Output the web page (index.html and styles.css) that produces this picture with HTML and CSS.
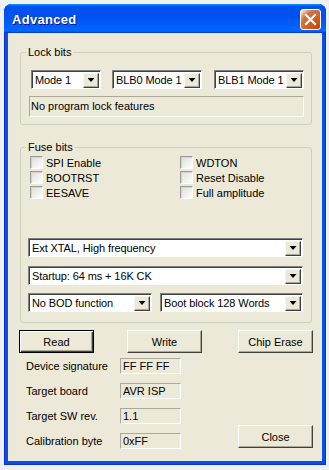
FILE: index.html
```html
<html>
<head>
	<link rel="stylesheet" href="styles.css">
</head>
<body>

	<div class="window">
		<div class="titlebar">
			<span class="title">Advanced</span>
			<span class="closex">
				<svg width="19" height="19" viewBox="0 0 19 19"><path d="M5 5 L14 14 M14 5 L5 14" stroke="#fff" stroke-width="2.2" stroke-linecap="square"/></svg>
			</span>
		</div>

		<div class="client">
			<fieldset class="group lock">
				<legend>Lock bits</legend>
				<div class="lockrow">
					<div class="combo mode"><span class="txt">Mode 1</span><span class="arrow"></span></div>
					<div class="combo blb0"><span class="txt">BLB0 Mode 1</span><span class="arrow"></span></div>
					<div class="combo blb1"><span class="txt">BLB1 Mode 1</span><span class="arrow"></span></div>
				</div>
				<div class="static lockinfo">No program lock features</div>
			</fieldset>

			<fieldset class="group fuse">
				<legend>Fuse bits</legend>
				<div class="checks">
					<div class="chk"><span class="box"></span>SPI Enable</div>
					<div class="chk"><span class="box"></span>WDTON</div>
					<div class="chk"><span class="box"></span>BOOTRST</div>
					<div class="chk"><span class="box"></span>Reset Disable</div>
					<div class="chk"><span class="box"></span>EESAVE</div>
					<div class="chk"><span class="box"></span>Full amplitude</div>
				</div>
				<div class="combo wide osc"><span class="txt">Ext XTAL, High frequency</span><span class="arrow"></span></div>
				<div class="combo wide startup"><span class="txt">Startup: 64 ms + 16K CK</span><span class="arrow"></span></div>
				<div class="fuserow">
					<div class="combo bod"><span class="txt">No BOD function</span><span class="arrow"></span></div>
					<div class="combo boot"><span class="txt">Boot block 128 Words</span><span class="arrow"></span></div>
				</div>
			</fieldset>

			<div class="buttons">
				<button class="button default">Read</button>
				<button class="button write">Write</button>
				<button class="button erase">Chip Erase</button>
			</div>

			<div class="bottom">
				<div class="info">
					<div class="inforow"><span class="lbl">Device signature</span><span class="val">FF FF FF</span></div>
					<div class="inforow"><span class="lbl">Target board</span><span class="val">AVR ISP</span></div>
					<div class="inforow"><span class="lbl">Target SW rev.</span><span class="val">1.1</span></div>
					<div class="inforow"><span class="lbl">Calibration byte</span><span class="val">0xFF</span></div>
				</div>
				<button class="button close">Close</button>
			</div>
		</div>
	</div>

</body>
</html>
```

FILE: styles.css
```css
body{margin:0; background:#eef0f3; font-family:"Liberation Sans", Arial, sans-serif; font-size:11px; color:#000;}

/* window frame */
.window{margin:4px 3px 0 4px; width:322px; height:461px; display:flex; flex-direction:column; background:#0a50e0; border-radius:8px 8px 0 0; box-shadow:inset 0 0 0 1px #0831d9;}
.titlebar{height:29px; flex:none; display:flex; align-items:center; justify-content:space-between; padding:1px 5px 0 8px; box-sizing:border-box; border-radius:7px 7px 0 0; background:linear-gradient(180deg,#0997ff,#0053ee 8%,#0050ee 40%,#06f 88%,#06f 93%,#005bff 95%,#003dd7 96%,#003dd7);}
.title{color:#fff; font-weight:bold; font-size:13px; letter-spacing:0.3px; text-shadow:1px 1px #0f1089;}
.closex{width:21px; height:21px; box-sizing:border-box; display:flex; align-items:center; justify-content:center; border:1px solid #fff; border-radius:3px; background:radial-gradient(circle at 90% 90%,#cc4600 0%,#dc6527 55%,#cd7546 70%,#ffccb2 90%,#fff 100%);}
.client{flex:1; margin:0 4px 4px; background:#ece9d8; display:flex; flex-direction:column;}

/* group boxes */
.group{margin:0 10px 0 12px; padding:0; border:1px solid #d0d0bf; border-radius:3px; min-inline-size:0;}
.group legend{padding:0 2px; margin-left:5px; line-height:13px;}
.lock{margin-top:13px; padding-bottom:7px;}
.fuse{margin-top:16px; padding-bottom:10px;}

/* combo boxes */
.combo{box-sizing:border-box; height:19px; display:flex; align-items:center; padding-left:3px; background:#fff; border:1px solid; border-color:#808080 #fff #fff #808080; box-shadow:inset 1px 1px #404040; white-space:nowrap;}
.combo .txt{flex:1; min-width:0; overflow:hidden; letter-spacing:-0.1px;}
.arrow{flex:none; margin-right:1px; width:16px; height:15px; margin-top:1px; box-sizing:border-box; display:flex; align-items:center; justify-content:center; background:#ece9d8; border:1px solid; border-color:#f7f6f1 #404040 #404040 #f7f6f1; box-shadow:inset -1px -1px #aca899;}
.arrow::after{content:""; width:7px; height:4px; background:#000; clip-path:polygon(0 0,100% 0,50% 100%);}

.lockrow{display:flex; margin:11px 0 0 10px;}
.mode{width:70px;}
.blb0{width:90px; margin-left:11px;}
.blb1{width:90px; margin-left:12px;}
.static{box-sizing:border-box; border:1px solid; border-color:#aca899 #fff #fff #aca899;}
.lockinfo{height:21px; line-height:19px; width:275px; margin:7px 0 0 8px; padding-left:1px;}

/* fuse checkboxes */
.checks{display:grid; grid-template-columns:150px auto; grid-auto-rows:15px; margin:1px 0 0 9px;}
.chk{display:flex; align-items:center;}
.box{width:13px; height:13px; box-sizing:border-box; margin-right:3px; border:1px solid; border-color:#9d9d9a #fff #fff #9d9d9a; box-shadow:inset 1px 1px #d5d3c9; background:linear-gradient(135deg,#dcdcd7,#fff);}

.wide{width:275px; margin-left:7px;}
.osc{margin-top:38px;}
.startup{margin-top:9px;}
.fuserow{display:flex; margin:8px 0 0 7px;}
.bod{width:124px;}
.boot{width:143px; margin-left:8px;}

/* push buttons */
.button{width:75px; height:23px; box-sizing:border-box; padding:0; font-family:"Liberation Sans", Arial, sans-serif; font-size:11px; color:#000; background:#ece9d8; border:1px solid; border-color:#fff #404040 #404040 #fff; box-shadow:inset -1px -1px #aca899;}
.default{border-color:#000; box-shadow:inset 1px 1px #fff, inset -1px -1px #404040, inset -2px -2px #aca899;}
.buttons{display:flex; margin:7px 0 0 11px;}
.write{margin-left:33px;}
.erase{margin-left:36px;}

/* info rows */
.bottom{display:flex; justify-content:space-between; align-items:flex-end; margin-top:5px;}
.info{display:flex; flex-direction:column; gap:9px; padding-left:18px;}
.inforow{display:flex; align-items:center; height:16px;}
.lbl{width:94px;}
.val{box-sizing:border-box; width:61px; height:16px; line-height:14px; padding-left:2px; border:1px solid; border-color:#aca899 #fff #fff #aca899;}
.close{margin:0 9px 1px 0;}
```
